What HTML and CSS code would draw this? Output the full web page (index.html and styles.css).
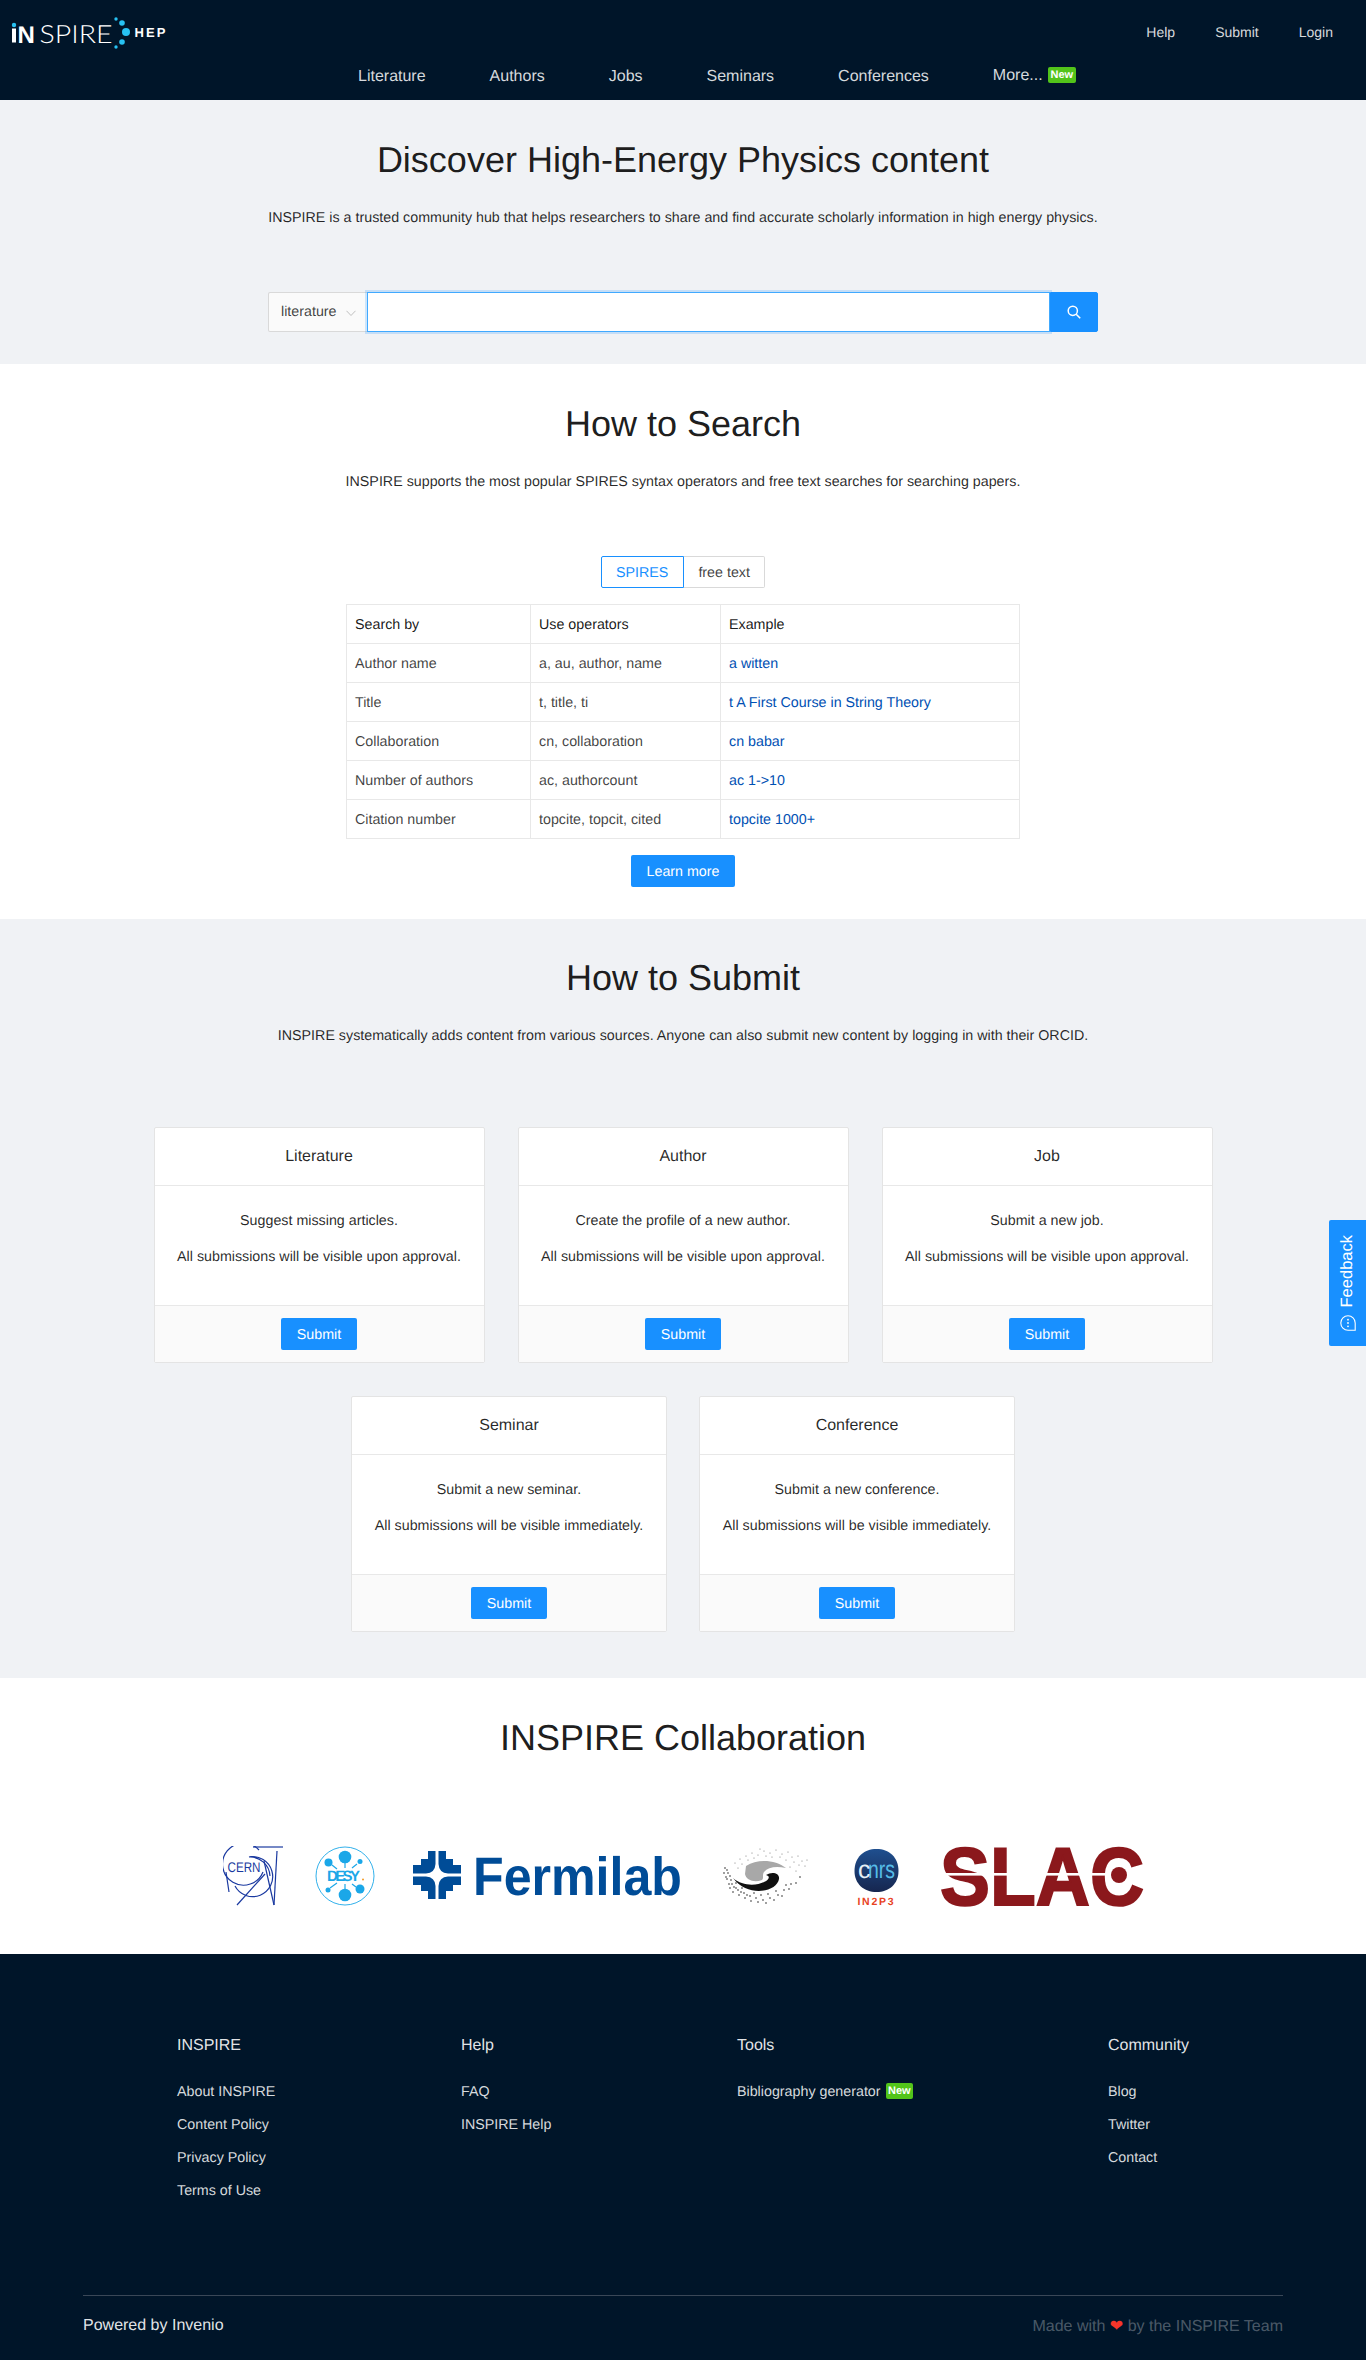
FILE: index.html
```html
<!DOCTYPE html>
<html lang="en">
<head>
<meta charset="utf-8">
<title>INSPIRE HEP</title>
<link rel="stylesheet" href="styles.css">
</head>
<body>
<header class="header">
  <div class="header-top">
    <a class="logo" href="#">
      <svg width="170" height="56" viewBox="0 0 170 56">
        <circle cx="14" cy="25" r="2.2" fill="#27c2f3"/>
        <rect x="12" y="28.500" width="4" height="14" fill="#fff"/>
        <text x="17.500" y="42.500" class="logo-n">N</text>
        <text x="39.500" y="42.500" class="logo-spire" textLength="73" lengthAdjust="spacingAndGlyphs">SPIRE</text>
        <circle cx="116" cy="19" r="1.700" fill="#27c2f3"/>
        <circle cx="122" cy="23" r="2.800" fill="#27c2f3"/>
        <circle cx="126" cy="32" r="4" fill="#27c2f3"/>
        <circle cx="122" cy="42" r="2.800" fill="#27c2f3"/>
        <circle cx="116" cy="47" r="1.700" fill="#27c2f3"/>
        <text x="134.500" y="37" class="logo-hep" textLength="33">HEP</text>
      </svg>
    </a>
    <nav class="top-links">
      <a href="#">Help</a>
      <a href="#">Submit</a>
      <a href="#">Login</a>
    </nav>
  </div>
  <nav class="main-nav">
    <a href="#">Literature</a>
    <a href="#">Authors</a>
    <a href="#">Jobs</a>
    <a href="#">Seminars</a>
    <a href="#">Conferences</a>
    <a href="#" class="more">More... <span class="badge">New</span></a>
  </nav>
</header>

<section class="section grey hero">
  <h1>Discover High-Energy Physics content</h1>
  <p class="lead">INSPIRE is a trusted community hub that helps researchers to share and find accurate scholarly information in high energy physics.</p>
  <div class="search">
    <div class="search-select">
      <span>literature</span>
      <svg width="10" height="10" viewBox="0 0 10 10"><path d="M0.500 2.800 L5 7.500 L9.500 2.800" fill="none" stroke="#bfbfbf" stroke-width="1"/></svg>
    </div>
    <div class="search-input"></div>
    <button class="search-btn" aria-label="Search">
      <svg width="16" height="16" viewBox="0 0 16 16"><circle cx="6.800" cy="6.800" r="4.600" fill="none" stroke="#fff" stroke-width="1.500"/><path d="M10.200 10.200 L14.200 14.200" stroke="#fff" stroke-width="1.600"/></svg>
    </button>
  </div>
</section>

<section class="section how-search">
  <h1>How to Search</h1>
  <p class="lead">INSPIRE supports the most popular SPIRES syntax operators and free text searches for searching papers.</p>
  <div class="toggle">
    <span class="toggle-item active">SPIRES</span>
    <span class="toggle-item">free text</span>
  </div>
  <table class="syntax">
    <colgroup><col class="c1"><col class="c2"><col class="c3"></colgroup>
    <tr class="head"><td>Search by</td><td>Use operators</td><td>Example</td></tr>
    <tr><td>Author name</td><td>a, au, author, name</td><td><a href="#">a witten</a></td></tr>
    <tr><td>Title</td><td>t, title, ti</td><td><a href="#">t A First Course in String Theory</a></td></tr>
    <tr><td>Collaboration</td><td>cn, collaboration</td><td><a href="#">cn babar</a></td></tr>
    <tr><td>Number of authors</td><td>ac, authorcount</td><td><a href="#">ac 1-&gt;10</a></td></tr>
    <tr><td>Citation number</td><td>topcite, topcit, cited</td><td><a href="#">topcite 1000+</a></td></tr>
  </table>
  <a class="btn learn" href="#">Learn more</a>
</section>

<section class="section grey how-submit">
  <h1>How to Submit</h1>
  <p class="lead">INSPIRE systematically adds content from various sources. Anyone can also submit new content by logging in with their ORCID.</p>
  <div class="cards">
    <article class="card wide">
      <h2>Literature</h2>
      <div class="card-body"><p>Suggest missing articles.</p><p>All submissions will be visible upon approval.</p></div>
      <div class="card-actions"><a class="btn" href="#">Submit</a></div>
    </article>
    <article class="card wide">
      <h2>Author</h2>
      <div class="card-body"><p>Create the profile of a new author.</p><p>All submissions will be visible upon approval.</p></div>
      <div class="card-actions"><a class="btn" href="#">Submit</a></div>
    </article>
    <article class="card wide">
      <h2>Job</h2>
      <div class="card-body"><p>Submit a new job.</p><p>All submissions will be visible upon approval.</p></div>
      <div class="card-actions"><a class="btn" href="#">Submit</a></div>
    </article>
  </div>
  <div class="cards second">
    <article class="card narrow">
      <h2>Seminar</h2>
      <div class="card-body"><p>Submit a new seminar.</p><p>All submissions will be visible immediately.</p></div>
      <div class="card-actions"><a class="btn" href="#">Submit</a></div>
    </article>
    <article class="card narrow">
      <h2>Conference</h2>
      <div class="card-body"><p>Submit a new conference.</p><p>All submissions will be visible immediately.</p></div>
      <div class="card-actions"><a class="btn" href="#">Submit</a></div>
    </article>
  </div>
</section>

<section class="section collab">
  <h1>INSPIRE Collaboration</h1>
  <div class="logos">
    <svg class="l-cern" width="60" height="60" viewBox="0 0 60 60">
      <g fill="none" stroke="#1a39a0" stroke-width="1.200">
        <path d="M30 1 H60"/>
        <path d="M36 4 A21 21 0 1 0 40 26"/>
        <path d="M12 40 A20 20 0 1 0 26 11 A20 20 0 0 1 47 30"/>
        <path d="M54 5 L51 59"/>
        <path d="M41 15 L51 59"/>
        <path d="M14 59 L42 28"/>
        <path d="M6 46 L3 26"/>
      </g>
      <text x="4.500" y="25.500" class="cern-text" textLength="33" lengthAdjust="spacingAndGlyphs">CERN</text>
    </svg>
    <svg class="l-desy" width="60" height="60" viewBox="0 0 60 60">
      <circle cx="30" cy="30" r="29" fill="#fff" stroke="#1ba7e8" stroke-width="0.900"/>
      <g stroke="#1ba7e8" stroke-width="1.200">
        <path d="M30 17 V22 M30 38 V43 M17 19 L22 23 M42 18 L37 22 M15 42 L22 37 M41 41 L37 38"/>
      </g>
      <g fill="#1ba7e8">
        <circle cx="30" cy="11" r="6.300"/><circle cx="30" cy="49" r="6.300"/>
        <circle cx="13.500" cy="16.500" r="4"/><circle cx="45" cy="15.500" r="2.500"/>
        <circle cx="13" cy="44" r="2.500"/><circle cx="45" cy="43" r="4.500"/>
      </g>
      <text x="12" y="34.500" class="desy-text" textLength="33">DESY</text>
      <circle cx="48" cy="33.500" r="1" fill="#f59a23"/>
    </svg>
    <svg class="l-fermi" width="300" height="80" viewBox="0 -10 300 80">
      <defs>
        <path id="fq" d="M15 0 H22.500 V13 Q22 22 13 22.500 H0 V14 H8 V8 H15 Z"/>
      </defs>
      <g fill="#004c97" transform="translate(0 5)">
        <use href="#fq"/>
        <use href="#fq" transform="translate(48 0) scale(-1 1)"/>
        <use href="#fq" transform="translate(0 48) scale(1 -1)"/>
        <use href="#fq" transform="translate(48 48) scale(-1 -1)"/>
      </g>
      <text x="60" y="49" class="fermi-text" textLength="209" lengthAdjust="spacingAndGlyphs">Fermilab</text>
    </svg>
    <svg class="l-ihep" width="90" height="60" viewBox="0 0 90 60">
      <path d="M26 20 C38 12 56 14 66 22 C56 20 48 21 44 26 C42 29 44 32 42 34 C34 37 26 34 25 28 Z" fill="#a8a8a8"/>
      <path d="M13 32 C22 40 36 40 44 36 C50 33 50 30 46 29 C52 25 60 27 59 33 C57 46 28 52 13 32 Z" fill="#111"/>
      <path d="M5 22h0M8 27h0M6 31h0M11 34h0M9 38h0M14 41h0M13 46h0M18 44h0M19 49h0M24 47h0M25 52h0M30 50h0M31 55h0M36 52h0M38 56h0M43 54h0M46 57h0M50 52h0M54 54h0M58 49h0M62 50h0M64 44h0M69 43h0M71 38h0M76 37h0M80 31h0M7 24h0M16 37h0M22 42h0M34 47h0M41 49h0M48 48h0M56 45h0M66 39h0M4 27h0M7 33h0M10 30h0M12 38h0M16 42h0M10 42h0M21 46h0M27 49h0" fill="none" stroke="#222" stroke-width="1.600" stroke-linecap="round"/>
      <path d="M15 17h0M20 13h0M26 10h0M32 7h0M38 9h0M44 5h0M50 7h0M56 4h0M62 8h0M68 6h0M72 11h0M78 10h0M82 15h0M87 14h0M85 20h0M79 19h0M74 16h0M66 14h0M70 21h0M76 25h0M60 11h0M52 11h0M46 10h0M40 3h0M34 12h0M28 14h0M22 18h0M18 22h0" fill="none" stroke="#777" stroke-width="1.200" stroke-linecap="round"/>
    </svg>
    <svg class="l-cnrs" width="60" height="80" viewBox="0 -10 60 80">
      <defs>
        <linearGradient id="cn" x1="0" y1="0" x2="0" y2="1"><stop offset="0" stop-color="#1f4f8f"/><stop offset="1" stop-color="#16264f"/></linearGradient>
      </defs>
      <path d="M23.500 3 C36 3 45.500 11 45.500 25 C45.500 38 36 46 23.500 46 C11 46 1.500 38 1.500 25 C1.500 11 11 3 23.500 3 Z" fill="url(#cn)"/>
      <text x="5" y="32" class="cnrs-c" textLength="9">c</text>
      <text x="15" y="32" class="cnrs-rest" textLength="27" lengthAdjust="spacingAndGlyphs">nrs</text>
      <text x="4.500" y="58.500" class="cnrs-in" textLength="36">IN2P3</text>
    </svg>
    <svg class="l-slac" width="240" height="100" viewBox="0 -20 240 100">
      <text x="-1" y="59" class="slac-text" textLength="204" lengthAdjust="spacingAndGlyphs">SLAC</text>
      <rect x="0" y="27" width="202" height="2.600" fill="#fff"/>
      <circle cx="178" cy="29" r="11" fill="#fff"/>
      <circle cx="178" cy="29" r="8" fill="#8b181c"/>
    </svg>
  </div>
</section>

<footer class="footer">
  <div class="footer-cols">
    <div class="fcol">
      <h3>INSPIRE</h3>
      <a href="#">About INSPIRE</a>
      <a href="#">Content Policy</a>
      <a href="#">Privacy Policy</a>
      <a href="#">Terms of Use</a>
    </div>
    <div class="fcol">
      <h3>Help</h3>
      <a href="#">FAQ</a>
      <a href="#">INSPIRE Help</a>
    </div>
    <div class="fcol">
      <h3>Tools</h3>
      <a href="#">Bibliography generator <span class="badge">New</span></a>
    </div>
    <div class="fcol">
      <h3>Community</h3>
      <a href="#">Blog</a>
      <a href="#">Twitter</a>
      <a href="#">Contact</a>
    </div>
  </div>
  <div class="footer-bottom">
    <span class="powered">Powered by Invenio</span>
    <span class="made">Made with <span class="heart">❤</span> by the INSPIRE Team</span>
  </div>
</footer>

<a class="feedback" href="#">
  <span>Feedback</span>
  <svg width="16" height="16" viewBox="0 0 16 16"><path d="M8 .8 A7.200 7.200 0 0 0 8 15.200 H15.200 V8 A7.200 7.200 0 0 0 8 .8 Z" fill="none" stroke="#fff" stroke-width="1.100"/><circle cx="8" cy="4.700" r=".9" fill="#fff"/><circle cx="8" cy="8" r=".9" fill="#fff"/><circle cx="8" cy="11.300" r=".9" fill="#fff"/></svg>
</a>
</body>
</html>
```

FILE: styles.css
```css
* { box-sizing: border-box; }
html, body { margin: 0; padding: 0; }
body {
  font-family: "Liberation Sans", Arial, sans-serif;
  font-size: 14.28px;
  line-height: 23px;
  color: rgba(0, 0, 0, 0.85);
  background: #fff;
  position: relative;
  height: 2360px;
  overflow: hidden;
  text-rendering: geometricPrecision;
}
a { text-decoration: none; }

.header { height: 100px; background: #001529; display: flex; flex-direction: column; }
.header-top { height: 65px; display: flex; justify-content: space-between; align-items: flex-start; padding-right: 33px; }
.logo { display: block; height: 56px; }
.logo svg { display: block; }
.logo-n { font: 700 24px "Liberation Sans", sans-serif; fill: #fff; }
.logo-spire { font: 300 25px Lato, "Open Sans", sans-serif; fill: #fff; }
.logo-hep { font: 700 13px "Liberation Sans", sans-serif; fill: #fff; letter-spacing: 2px; }
.top-links { display: flex; gap: 40px; padding-top: 21px; }
.top-links a { color: rgba(255, 255, 255, 0.85); font-size: 14px; line-height: 22px; }
.main-nav { display: flex; gap: 64px; padding-left: 358px; }
.main-nav a { color: rgba(255, 255, 255, 0.85); font-size: 16px; line-height: 24px; white-space: nowrap; }
.main-nav .more { position: relative; top: -1px; }
.badge {
  display: inline-block;
  background: #52c41a;
  color: #fff;
  font-size: 11px;
  font-weight: 700;
  line-height: 16px;
  height: 16px;
  padding: 0 2.500px;
  border-radius: 2px;
  vertical-align: 2px;
  margin-left: 1px;
}

.section { display: flex; flex-direction: column; align-items: center; }
.grey { background: #f0f2f5; }
.section h1 { margin: 0 0 24px; font-size: 36px; font-weight: 400; line-height: 47px; color: rgba(0, 0, 0, 0.9); }
.lead { margin: 0 0 62px; }
.hero { height: 264px; padding-top: 36px; }
.how-search { height: 555px; padding-top: 36px; }
.how-submit { height: 759px; padding-top: 35px; }
.how-submit .lead { margin-bottom: 79px; }
.collab { height: 276px; padding-top: 36px; }

.search { width: 830px; height: 40px; display: flex; }
.search-select {
  width: 99px;
  background: #fafafa;
  border: 1px solid #d9d9d9;
  border-right: 0;
  border-radius: 2px 0 0 2px;
  display: flex;
  align-items: center;
  justify-content: space-between;
  padding: 1px 11px 0 12px;
  color: rgba(0, 0, 0, 0.75);
}
.search-input { flex: 1; background: #fff; border: 1px solid #40a9ff; box-shadow: 0 0 0 2px rgba(24, 144, 255, 0.2); position: relative; }
.search-btn {
  width: 48px;
  background: #1890ff;
  border: 1px solid #1890ff;
  border-radius: 0 2px 2px 0;
  display: flex;
  align-items: center;
  justify-content: center;
  padding: 0;
  position: relative;
}

.toggle { display: flex; height: 32px; margin-bottom: 16px; }
.toggle-item {
  border: 1px solid #d9d9d9;
  border-left: 0;
  padding: 0 14.500px;
  line-height: 32px;
  background: #fff;
  color: rgba(0, 0, 0, 0.75);
  border-radius: 0 2px 2px 0;
}
.toggle-item.active { border: 1px solid #1890ff; color: #1890ff; border-radius: 2px 0 0 2px; }

.syntax { width: 674px; table-layout: fixed; border-collapse: collapse; margin-bottom: 16px; }
.c1 { width: 184px; }
.c2 { width: 190px; }
.syntax td { border: 1px solid #e8e8e8; padding: 8.500px 8px 6.500px; height: 39px; color: rgba(0, 0, 0, 0.75); }
.syntax .head td { color: rgba(0, 0, 0, 0.9); }
.syntax a { color: #0050b3; }

.btn {
  display: inline-block;
  height: 32px;
  line-height: 34px;
  padding: 0 16px;
  background: #1890ff;
  color: #fff;
  border-radius: 2px;
}

.cards { display: flex; gap: 33px; }
.second { margin-top: 33px; gap: 32px; }
.card { background: #fff; border: 1px solid #e4e4e4; border-radius: 2px; display: flex; flex-direction: column; height: 236px; }
.wide { width: 331px; }
.narrow { width: 316px; }
.card h2 { margin: 0; padding: 16px 24px; font-size: 16px; font-weight: 400; line-height: 25px; text-align: center; border-bottom: 1px solid #e8e8e8; color: rgba(0, 0, 0, 0.85); }
.card-body { padding: 24px 8px; height: 119px; text-align: center; }
.card-body p { margin: 0 0 13px; }
.card-actions { flex: 1; background: #fafafa; border-top: 1px solid #e8e8e8; padding-top: 12px; text-align: center; }

.logos { width: 920px; margin-top: 61px; height: 60px; display: flex; align-items: center; }
.logos svg { display: block; flex: none; }
.l-desy { margin-left: 32px; }
.l-fermi { margin-left: 38px; }
.l-ihep { margin-left: 7px; }
.l-cnrs { margin-left: 43px; }
.l-slac { margin-left: 28px; }
.cern-text { font: 400 14px "Liberation Sans", sans-serif; fill: #1a39a0; paint-order: stroke; stroke: #fff; stroke-width: 2px; }
.desy-text { font: 700 15px "Liberation Sans", sans-serif; fill: #1ba7e8; }
.fermi-text { font: 700 54px "Liberation Sans", sans-serif; fill: #004c97; }
.cnrs-c { font: 400 25px "Liberation Sans", sans-serif; fill: #e6eef5; }
.cnrs-rest { font: 400 25px "Liberation Sans", sans-serif; fill: #56bde8; }
.cnrs-in { font: 700 10.500px "Liberation Sans", sans-serif; fill: #e8431f; }
.slac-text { font: 700 82px "Liberation Sans", sans-serif; fill: #8b181c; stroke: #8b181c; stroke-width: 2px; }

.footer { height: 406px; background: #001529; color: #fff; padding-top: 80px; }
.footer-cols { display: grid; grid-template-columns: 284px 276px 371px 1fr; padding-left: 177px; height: 261px; }
.fcol h3 { margin: 0 0 23px; font-size: 16px; font-weight: 400; line-height: 24px; color: rgba(255, 255, 255, 0.9); }
.fcol a { display: block; color: rgba(255, 255, 255, 0.85); line-height: 23px; margin-bottom: 10px; white-space: nowrap; }
.footer-bottom { margin: 0 83px; border-top: 1px solid #3a4757; padding-top: 18px; display: flex; justify-content: space-between; font-size: 16px; line-height: 24px; }
.powered { color: rgba(255, 255, 255, 0.9); }
.made { color: rgba(255, 255, 255, 0.3); }
.heart { color: #f5352a; font-family: "DejaVu Sans", sans-serif; }

.feedback {
  position: absolute;
  left: 1329px;
  top: 1220px;
  width: 37px;
  height: 126px;
  background: #1890ff;
  border-radius: 2px 0 0 2px;
  color: #fff;
  display: flex;
  flex-direction: column;
  align-items: center;
  padding-top: 15px;
  gap: 8px;
  font-size: 16.500px;
}
.feedback span { writing-mode: vertical-rl; transform: rotate(180deg); line-height: 37px; }
.feedback svg { flex: none; }
```
